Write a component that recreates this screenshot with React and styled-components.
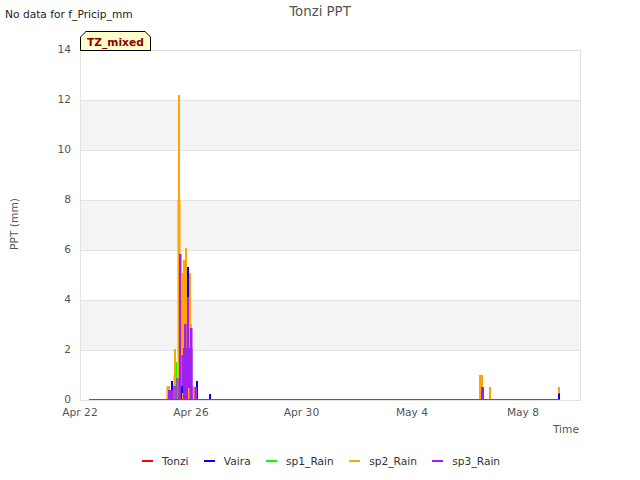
import React from 'react';
import styled, { createGlobalStyle } from 'styled-components';

const GlobalStyle = createGlobalStyle`
  html, body {
    margin: 0;
    padding: 0;
    background: #fff;
  }
  body {
    font-family: "DejaVu Sans", sans-serif;
    color: #333;
  }
`;

const Page = styled.div`
  position: relative;
  width: 640px;
  height: 480px;
  overflow: hidden;
  display: flex;
  flex-direction: column;
  background: #fff;
`;

const Title = styled.div`
  height: 24px;
  line-height: 23px;
  text-align: center;
  font-size: 13.33px;
  color: #555;
`;

const NoData = styled.div`
  position: absolute;
  left: 5px;
  top: 8px;
  font-size: 10.67px;
  line-height: 13px;
  color: #222;
`;

const Badge = styled.div`
  position: absolute;
  left: 80px;
  top: 31px;
  width: 71px;
  height: 20px;
  box-sizing: border-box;
  padding: 4px 0 0 7px;
  background: #000;
  clip-path: polygon(6px 0, 65px 0, 71px 6px, 71px 20px, 0 20px, 0 6px);
`;

const BadgeFill = styled.div`
  position: absolute;
  inset: 1px;
  background: #ffffcc;
  clip-path: polygon(5px 0, 64px 0, 69px 5px, 69px 18px, 0 18px, 0 5px);
`;

const BadgeText = styled.span`
  position: relative;
  display: block;
  font-size: 10.67px;
  line-height: 15px;
  font-weight: bold;
  color: #8b0000;
`;

const ChartFrame = styled.svg`
  display: block;
  width: 640px;
  height: 429px;
  flex: none;
`;

const Legend = styled.ul`
  list-style: none;
  margin: 0;
  padding: 0 0 0 142px;
  height: 27px;
  display: flex;
  align-items: flex-start;
  gap: 15.3px;
`;

const LegendItem = styled.li`
  display: flex;
  align-items: center;
  gap: 9px;
  height: 16px;
  font-size: 10.67px;
  color: #333;
`;

const LegendLine = styled.span`
  display: block;
  width: 11px;
  height: 2px;
  background: ${props => props.$color};
`;

const COLORS = {
  red: '#ff0000',
  blue: '#0000ff',
  green: '#00ff00',
  orange: '#ffa500',
  purple: '#a020f0',
};

const LEGEND = [
  { label: 'Tonzi', color: COLORS.red },
  { label: 'Vaira', color: COLORS.blue },
  { label: 'sp1_Rain', color: COLORS.green },
  { label: 'sp2_Rain', color: COLORS.orange },
  { label: 'sp3_Rain', color: COLORS.purple },
];

const Y_TICKS = [14, 12, 10, 8, 6, 4, 2, 0];
const X_TICKS = [
  { x: 80, label: 'Apr 22' },
  { x: 191, label: 'Apr 26' },
  { x: 301.5, label: 'Apr 30' },
  { x: 412, label: 'May 4' },
  { x: 523, label: 'May 8' },
];

// color, x, width, top y, opacity — the bottom is always the zero line
const BARS = [
  [COLORS.orange, 177, 4, 200, 0.55],
  [COLORS.orange, 178, 2, 95],
  [COLORS.orange, 166, 1, 387, 0.6],
  [COLORS.orange, 167, 3, 386],
  [COLORS.orange, 173, 1, 375, 0.5],
  [COLORS.orange, 174, 2, 349],
  [COLORS.green, 176, 1, 362],
  [COLORS.orange, 182, 1, 273],
  [COLORS.orange, 183, 2, 260],
  [COLORS.orange, 185, 2, 248],
  [COLORS.orange, 187, 2, 273],
  [COLORS.orange, 189, 2, 273],
  [COLORS.orange, 191, 1, 324],
  [COLORS.blue, 187, 2, 267],
  [COLORS.blue, 171, 2, 381],
  [COLORS.blue, 196, 2, 381],
  [COLORS.blue, 209, 2, 394],
  [COLORS.purple, 168, 5, 390],
  [COLORS.purple, 173, 3, 386, 0.75],
  [COLORS.purple, 176, 3, 378, 0.7],
  [COLORS.purple, 179, 2.5, 254],
  [COLORS.purple, 181.5, 1.5, 355],
  [COLORS.purple, 183, 9.5, 348],
  [COLORS.purple, 184, 2.5, 324],
  [COLORS.purple, 187, 2, 297],
  [COLORS.purple, 190, 2.5, 328],
  [COLORS.purple, 192.5, 4.5, 387],
  [COLORS.blue, 181, 2, 386],
  [COLORS.orange, 182, 1, 393],
  [COLORS.orange, 188, 1.5, 388],
  [COLORS.orange, 193, 1.5, 386],
  [COLORS.orange, 479, 4, 375],
  [COLORS.orange, 489, 2, 387],
  [COLORS.purple, 481, 3, 387],
  [COLORS.orange, 558, 2, 387],
  [COLORS.purple, 558, 2, 393],
  [COLORS.blue, 558, 2, 394],
];

function Chart() {
  return (
    <ChartFrame viewBox="0 24 640 429">
      <g fill="#f4f4f4">
        <rect x="80" y="100" width="500" height="50" />
        <rect x="80" y="200" width="500" height="50" />
        <rect x="80" y="300" width="500" height="50" />
      </g>
      <g stroke="#e2e2e2" strokeWidth="1">
        {Y_TICKS.map((t, i) => (
          <line key={t} x1="80" x2="580" y1={50.5 + i * 50} y2={50.5 + i * 50} />
        ))}
        <line x1="80.5" x2="80.5" y1="50" y2="400" />
        <line x1="580.5" x2="580.5" y1="50" y2="401" />
      </g>
      {BARS.map(([color, x, w, top, opacity], i) => (
        <rect key={i} x={x} y={top} width={w} height={400 - top} fill={color} opacity={opacity ?? 1} />
      ))}
      <line x1="89" x2="560" y1="399.5" y2="399.5" stroke={COLORS.purple} strokeWidth="1" />
      <g fontFamily="DejaVu Sans, sans-serif" fontSize="10.67" fill="#555">
        {Y_TICKS.map((t, i) => (
          <text key={t} x="71" y={53 + i * 50} textAnchor="end">{t}</text>
        ))}
        {X_TICKS.map(t => (
          <text key={t.label} x={t.x} y="416" textAnchor="middle">{t.label}</text>
        ))}
        <text x="579" y="433" textAnchor="end">Time</text>
        <text transform="translate(18 224) rotate(-90)" textAnchor="middle">PPT (mm)</text>
      </g>
    </ChartFrame>
  );
}

export default function App() {
  return (
    <Page>
      <GlobalStyle />
      <Title>Tonzi PPT</Title>
      <NoData>No data for f_Pricip_mm</NoData>
      <Chart />
      <Badge>
        <BadgeFill />
        <BadgeText>TZ_mixed</BadgeText>
      </Badge>
      <Legend>
        {LEGEND.map(item => (
          <LegendItem key={item.label}>
            <LegendLine $color={item.color} />
            {item.label}
          </LegendItem>
        ))}
      </Legend>
    </Page>
  );
}
